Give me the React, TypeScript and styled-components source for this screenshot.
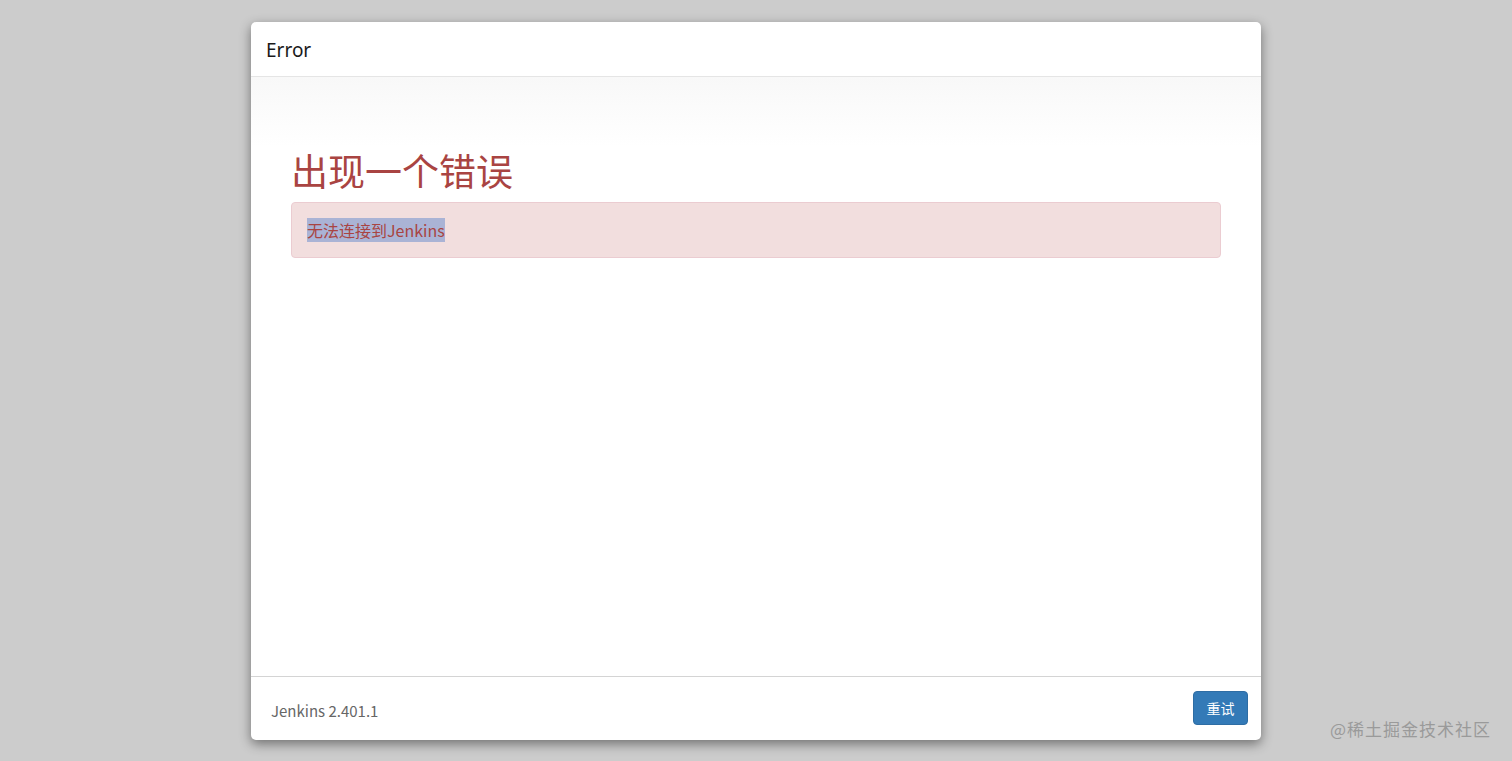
import React from "react";
import styled, { createGlobalStyle } from "styled-components";

const Global = createGlobalStyle`
  html, body { margin: 0; padding: 0; }
  body {
    background: #cccccc;
    font-family: "Noto Sans", "Noto Sans CJK SC", sans-serif;
    height: 761px;
    overflow: hidden;
  }
`;

const Page = styled.div`
  height: 761px;
  display: flex;
  justify-content: center;
  padding-top: 22px;
  box-sizing: border-box;
  position: relative;
`;

const Modal = styled.div`
  width: 1010px;
  height: 718px;
  background: #fff;
  border-radius: 5px;
  box-shadow: 0 4px 12px rgba(0, 0, 0, 0.45);
  display: flex;
  flex-direction: column;
  overflow: hidden;
`;

const Header = styled.div`
  height: 54px;
  border-bottom: 1px solid #e5e5e5;
  display: flex;
  align-items: center;
  padding: 2px 15px 0;
  box-sizing: border-box;
  height: 55px;
  font-size: 19px;
  color: #1a1a1a;
`;

const Body = styled.div`
  flex: 1;
  background: linear-gradient(to bottom, #f8f8f8 0px, #ffffff 70px);
  padding: 71px 40px 0;
`;

const Title = styled.h1`
  margin: 0 0 10px;
  font-family: "Noto Sans CJK SC", sans-serif;
  font-weight: 400;
  font-size: 37px;
  line-height: 44px;
  color: #a94442;
`;

const Alert = styled.div`
  background: #f2dede;
  border: 1px solid #ebccd1;
  border-radius: 4px;
  padding: 15px;
  font-size: 16px;
  line-height: 24px;
  color: #a94442;
  font-family: "Noto Sans CJK SC", sans-serif;
`;

const Selected = styled.span`
  background: #aab3d5;
  color: #a94442;
`;

const Footer = styled.div`
  height: 63px;
  border-top: 1px solid #d4d4d4;
  display: flex;
  align-items: center;
  justify-content: space-between;
  padding: 0 13px 0 20px;
`;

const Version = styled.span`
  font-size: 15px;
  color: #666;
  margin-top: 3px;
  font-family: "Noto Sans CJK SC", sans-serif;
`;

const Button = styled.button`
  width: 55px;
  height: 34px;
  background: #337ab7;
  border: 1px solid #2e6da4;
  border-radius: 4px;
  color: #fff;
  font-size: 14px;
  font-family: "Noto Sans CJK SC", sans-serif;
  padding: 0;
  margin-top: -2px;
`;

const Watermark = styled.div`
  position: absolute;
  right: 21px;
  bottom: 20px;
  font-size: 17px;
  color: #9a9a9a;
  font-family: "Noto Sans CJK SC", sans-serif;
  letter-spacing: 1px;
`;

export default function App() {
  return (
    <>
      <Global />
      <Page>
        <Modal>
          <Header>Error</Header>
          <Body>
            <Title>出现一个错误</Title>
            <Alert>
              <Selected>无法连接到Jenkins</Selected>
            </Alert>
          </Body>
          <Footer>
            <Version>Jenkins 2.401.1</Version>
            <Button>重试</Button>
          </Footer>
        </Modal>
        <Watermark>@稀土掘金技术社区</Watermark>
      </Page>
    </>
  );
}
